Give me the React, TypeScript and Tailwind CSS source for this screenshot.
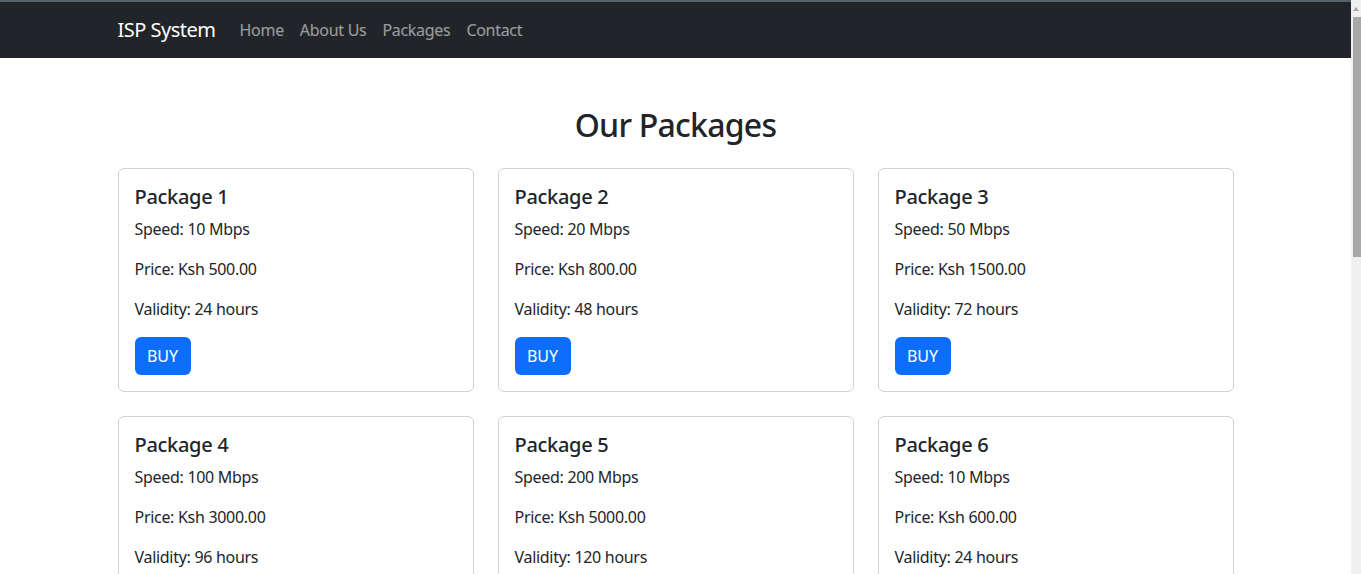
import React from 'react';

const packages = [
  { name: 'Package 1', speed: '10 Mbps', price: 'Ksh 500.00', validity: '24 hours' },
  { name: 'Package 2', speed: '20 Mbps', price: 'Ksh 800.00', validity: '48 hours' },
  { name: 'Package 3', speed: '50 Mbps', price: 'Ksh 1500.00', validity: '72 hours' },
  { name: 'Package 4', speed: '100 Mbps', price: 'Ksh 3000.00', validity: '96 hours' },
  { name: 'Package 5', speed: '200 Mbps', price: 'Ksh 5000.00', validity: '120 hours' },
  { name: 'Package 6', speed: '10 Mbps', price: 'Ksh 600.00', validity: '24 hours' },
];

export default function App() {
  return (
    <div className="flex bg-white text-[#212529]" style={{ fontFamily: '"Noto Sans", "Open Sans", sans-serif' }}>
      <div className="flex-1 min-w-0">
        {/* Navbar */}
        <nav className="bg-[#212529] border-t-2 border-[#58626c] h-[58px]">
          <div className="max-w-[1140px] mx-auto px-3 h-full flex items-center">
            <a className="text-white text-[20px] leading-[30px] mr-4 tracking-[-0.5px]">ISP System</a>
            <ul className="flex">
              {['Home', 'About Us', 'Packages', 'Contact'].map(link => (
                <li key={link}>
                  <a className="block px-2 py-2 text-[16px] leading-6 text-white/55 tracking-[-0.3px]">{link}</a>
                </li>
              ))}
            </ul>
          </div>
        </nav>

        <div className="max-w-[1140px] mx-auto px-3 pt-12">
          <h2 className="text-center text-[32px] leading-[1.2] font-medium mb-6 tracking-[-0.75px]">Our Packages</h2>

          <div className="grid grid-cols-3 gap-x-6">
            {packages.map(p => (
              <div key={p.name} className="mb-6 border border-black/[.175] rounded-md">
                <div className="p-4 tracking-[-0.3px]">
                  <h5 className="text-[20px] leading-[1.2] font-medium mb-2">{p.name}</h5>
                  <p className="text-[16px] leading-6 mb-4">Speed: {p.speed}</p>
                  <p className="text-[16px] leading-6 mb-4">Price: {p.price}</p>
                  <p className="text-[16px] leading-6 mb-4">Validity: {p.validity}</p>
                  <button className="bg-[#0d6efd] text-white text-[16px] leading-6 px-3 py-[7px] rounded-md tracking-normal w-[56px]">BUY</button>
                </div>
              </div>
            ))}
          </div>
        </div>
      </div>

      {/* Scrollbar */}
      <div className="w-[10px] h-screen sticky top-0 bg-[#f0f0f0] flex flex-col items-end shrink-0">
        <div className="h-[17px] w-full flex items-center justify-center">
          <div className="w-0 h-0 border-l-[3px] border-r-[3px] border-b-[4px] border-l-transparent border-r-transparent border-b-[#a3a3a3]" />
        </div>
        <div className="w-[8px] h-[240px] bg-[#a8a8a8]" />
      </div>
    </div>
  );
}
